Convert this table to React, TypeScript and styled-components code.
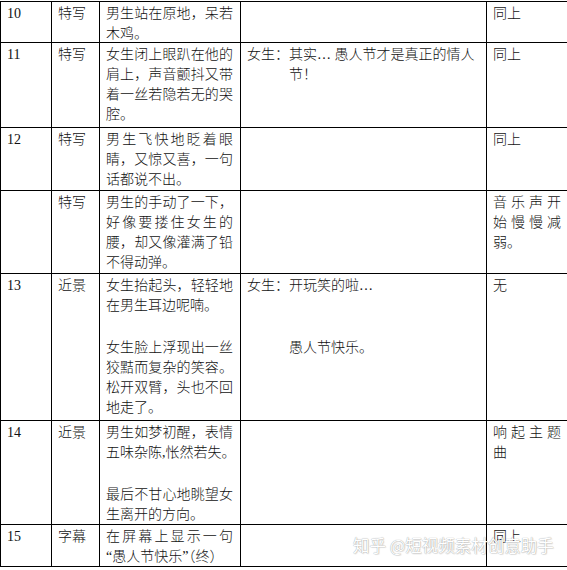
import React from "react";
import styled, { createGlobalStyle } from "styled-components";

const GlobalStyle = createGlobalStyle`
  html, body {
    margin: 0;
    padding: 0;
    background: #ffffff;
    overflow: hidden;
  }
  #root {
    width: 567px;
    height: 570px;
  }
`;

const Page = styled.div`
  position: relative;
  width: 567px;
  height: 570px;
  overflow: hidden;
  padding-top: 1px;
  box-sizing: border-box;
  font-family: "Liberation Serif", "Noto Sans CJK SC", serif;
  font-size: 14px;
  font-weight: 300;
  color: #111;
`;

const Sheet = styled.div`
  display: grid;
  grid-template-columns: 51px 48px 141px 246px 82px;
  grid-template-rows: 41px 85px 63px 83px 147px 104px 42px;
  width: max-content;
  border-top: 1px solid #000;
  border-left: 1px solid #000;
`;

const Cell = styled.div`
  box-sizing: border-box;
  border-right: 1px solid #000;
  border-bottom: 1px solid #000;
  padding: 2px 7px 0 6px;
  overflow: visible;
  min-width: 0;
`;

const Para = styled.div`
  & + & {
    margin-top: 22px;
  }
`;

const Line = styled.div<{ $justify?: boolean; $hang?: boolean }>`
  height: 20px;
  line-height: 20px;
  white-space: nowrap;
  padding-left: ${(p) => (p.$hang ? "42px" : "0")};
  text-align: ${(p) => (p.$justify ? "justify" : "left")};
  text-align-last: ${(p) => (p.$justify ? "justify" : "auto")};
  text-justify: inter-character;
`;

const Quote = styled.span`
  font-family: "Liberation Serif", serif;
`;

const Watermark = styled.div`
  position: absolute;
  left: 353px;
  top: 534px;
  font-family: "Noto Sans CJK SC", "Noto Sans", sans-serif;
  font-size: 16.5px;
  font-weight: 400;
  line-height: 22px;
  color: #ffffff;
  white-space: nowrap;
  text-shadow: 0 0 1px rgba(0, 0, 0, 0.3), 0 0 1px rgba(0, 0, 0, 0.2),
    1px 1px 1px rgba(0, 0, 0, 0.1);
  pointer-events: none;
`;

type DLine = { t: React.ReactNode; hang?: boolean };

type Row = {
  no: string;
  shot: string;
  action: React.ReactNode[][];
  dialog: DLine[][];
  sound: string[][];
};

const rows: Row[] = [
  {
    no: "10",
    shot: "特写",
    action: [["男生站在原地，呆若", "木鸡。"]],
    dialog: [],
    sound: [["同上"]],
  },
  {
    no: "11",
    shot: "特写",
    action: [["女生闭上眼趴在他的", "肩上，声音颤抖又带", "着一丝若隐若无的哭", "腔。"]],
    dialog: [[{ t: "女生：其实… 愚人节才是真正的情人" }, { t: "节！", hang: true }]],
    sound: [["同上"]],
  },
  {
    no: "12",
    shot: "特写",
    action: [["男生飞快地眨着眼", "睛，又惊又喜，一句", "话都说不出。"]],
    dialog: [],
    sound: [["同上"]],
  },
  {
    no: "",
    shot: "特写",
    action: [["男生的手动了一下，", "好像要搂住女生的", "腰，却又像灌满了铅", "不得动弹。"]],
    dialog: [],
    sound: [["音乐声开", "始慢慢减", "弱。"]],
  },
  {
    no: "13",
    shot: "近景",
    action: [
      ["女生抬起头，轻轻地", "在男生耳边呢喃。"],
      ["女生脸上浮现出一丝", "狡黠而复杂的笑容。", "松开双臂，头也不回", "地走了。"],
    ],
    dialog: [[{ t: "女生：开玩笑的啦…" }, { t: "" }], [{ t: "愚人节快乐。", hang: true }]],
    sound: [["无"]],
  },
  {
    no: "14",
    shot: "近景",
    action: [
      ["男生如梦初醒，表情", "五味杂陈,怅然若失。"],
      ["最后不甘心地眺望女", "生离开的方向。"],
    ],
    dialog: [],
    sound: [["响起主题", "曲"]],
  },
  {
    no: "15",
    shot: "字幕",
    action: [
      [
        "在屏幕上显示一句",
        <>
          <Quote>“</Quote>愚人节快乐<Quote>”</Quote>（终）
        </>,
      ],
    ],
    dialog: [],
    sound: [["同上"]],
  },
];

function Paragraphs({ paras }: { paras: React.ReactNode[][] }) {
  return (
    <>
      {paras.map((lines, pi) => (
        <Para key={pi}>
          {lines.map((l, li) => (
            <Line key={li} $justify={li < lines.length - 1}>
              {l}
            </Line>
          ))}
        </Para>
      ))}
    </>
  );
}

export default function App() {
  return (
    <>
      <GlobalStyle />
      <Page>
        <Sheet>
          {rows.map((r, i) => (
            <React.Fragment key={i}>
              <Cell>
                <Line>{r.no}</Line>
              </Cell>
              <Cell>
                <Line>{r.shot}</Line>
              </Cell>
              <Cell>
                <Paragraphs paras={r.action} />
              </Cell>
              <Cell>
                {r.dialog.map((lines, pi) => (
                  <Para key={pi}>
                    {lines.map((l, li) => (
                      <Line key={li} $hang={l.hang}>
                        {l.t}
                      </Line>
                    ))}
                  </Para>
                ))}
              </Cell>
              <Cell>
                <Paragraphs paras={r.sound} />
              </Cell>
            </React.Fragment>
          ))}
        </Sheet>
        <Watermark>知乎 @短视频素材创意助手</Watermark>
      </Page>
    </>
  );
}
